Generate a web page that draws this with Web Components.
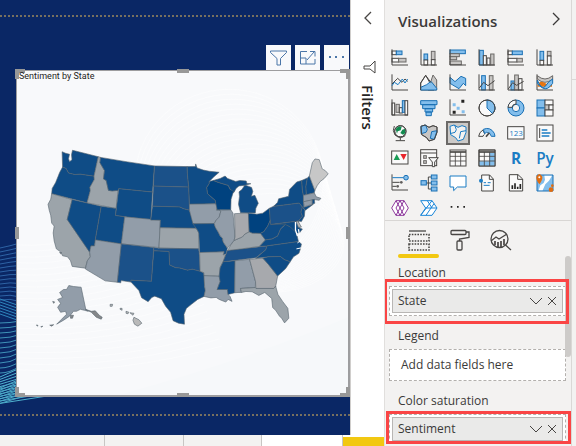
<!DOCTYPE html>
<html lang="en">
<head>
<meta charset="utf-8">
<title>Report editor</title>
<style>
  html, body { margin: 0; height: 100%; }
  body { font-family: "Open Sans", "Noto Sans", sans-serif; color: #3b3a39; background: #f3f2f1; overflow: hidden; }
</style>
</head>
<body>
<report-app></report-app>

<script>
const define = (name, html, setup) => customElements.define(name, class extends HTMLElement {
  constructor() {
    super();
    const t = document.createElement('template');
    t.innerHTML = html;
    this.attachShadow({ mode: 'open' }).append(t.content.cloneNode(true));
  }
  connectedCallback() { if (setup) setup(this, this.shadowRoot); }
});

/* ---------- icons: drawn on a 54-unit square ---------- */
const AX = '<path class="k" d="M3 1V48H51"/>';
const R = (c, x, y, w, h) => `<rect class="${c}" x="${x}" y="${y}" width="${w}" height="${h}"/>`;
const T = (size, weight, text) => `<text x="27" y="27" dy=".36em" text-anchor="middle" font-size="${size}" font-weight="${weight}" fill="#1a7cc4">${text}</text>`;
const MAPSHAPE = 'M3 7L15 3L27 10L39 5L51 9V25L43 46L27 51L20 41L5 32Z';
const ICONS = {
  'Stacked bar chart': R('w',3,6,13,11)+R('b',16,6,17,11)+R('w',3,28,20,11)+R('g',23,28,22,11)+AX,
  'Stacked column chart': R('b',12,15,11,18)+R('w',12,33,11,15)+R('g',34,7,11,25)+R('w',34,32,11,16)+AX,
  'Clustered bar chart': R('b',3,3,46,11)+R('g',3,14,28,9)+R('g',3,23,20,9)+R('g',3,36,34,11)+AX,
  'Clustered column chart': R('b',5,4,11,44)+R('w',16,20,9,28)+R('w',27,27,9,21)+R('g',38,15,10,33)+AX,
  '100% stacked bar chart': R('w',3,6,13,11)+R('b',16,6,30,11)+R('w',3,28,27,11)+R('g',30,28,16,11)+AX,
  '100% stacked column chart': R('b',12,7,11,27)+R('w',12,34,11,14)+R('g',34,7,11,14)+R('w',34,21,11,27)+AX,
  'Line chart': AX+'<path class="k" d="M3 30L20 13L33 25L42 15L50 22"/><path class="bl" d="M3 35L10 25L21 32L34 15L42 27L50 15"/>',
  'Area chart': '<path class="g" d="M24 48L39 3L50 18V48Z"/><path class="w" d="M2 48V27L17 4L42 48Z"/><path class="b" d="M2 48V40L20 32L33 22L50 43V48Z"/><path class="k" d="M2 48V27L17 4L33 26"/>',
  'Stacked area chart': '<path class="b" d="M3 10L18 23L36 7L50 13V35L43 28L30 44L18 37L3 28Z"/>'+AX,
  'Line and stacked column chart': R('b',11,5,11,43)+R('g',34,5,11,43)+AX+'<path class="k" d="M4 42L17 25L30 35L50 20"/>',
  'Line and clustered column chart': R('b',12,21,10,27)+R('g',23,3,11,45)+R('w',35,14,10,34)+AX+'<path class="k" d="M4 45L17 26L29 34L50 22"/>',
  'Ribbon chart': AX+'<path class="g" d="M4 5Q27 25 50 5V15Q27 35 4 15Z"/><path fill="#e87511" d="M5 33Q11 17 27 27T48 20V38H5Z"/><path class="b" d="M4 18Q16 48 27 38Q38 21 50 15V28Q34 51 20 42Q10 37 4 28Z"/>',
  'Waterfall chart': R('w',3,12,8,36)+R('g',15,16,10,24)+R('w',25,26,9,16)+R('b',34,5,8,35)+R('w',42,5,8,43)+AX,
  'Funnel chart': '<path class="b" d="M2 5H51V17H2ZM8 17H45V29H8ZM15 29H38V39H15ZM18 39H34V50H18Z"/>',
  'Scatter chart': AX+'<path fill="#252423" d="M37 2h9v9h-9zM11 35h9v9h-9z"/><path fill="#83beec" d="M11 13h9v9h-9zM23 23h9v9h-9zM38 34h9v9h-9z"/>',
  'Pie chart': '<circle class="w" cx="27" cy="27" r="24"/><path class="b" d="M27 3A24 24 0 0 1 44 44L27 27Z"/><circle class="k" cx="27" cy="27" r="24"/>',
  'Donut chart': '<path class="b" fill-rule="evenodd" d="M27 3A24 24 0 1 1 3 27A24 24 0 0 1 27 3M27 16A11 11 0 1 0 38 27A11 11 0 0 0 27 16"/><path class="w" d="M27 3A24 24 0 0 0 3 25L15 25A12 12 0 0 1 27 15Z"/>',
  'Treemap': R('b',3,3,24,24)+R('b',3,27,24,24)+R('w',27,3,24,15)+R('g',27,18,12,15)+R('w',39,18,12,15)+R('w',27,33,24,18),
  'Map': '<circle class="w" cx="28" cy="22" r="17"/><path fill="#118a4e" d="M14 15Q22 4 32 8L29 19L20 22L18 29ZM34 17L43 14L43 28L36 32L28 27Z"/><circle class="k" cx="28" cy="22" r="17"/><path class="k" d="M10 6Q3 20 12 33Q27 46 43 35M28 42V49M14 50H42"/>',
  'Filled map': `<path class="g" d="${MAPSHAPE}"/><path class="b" d="M3 7L17 3L22 17L18 25L3 29ZM35 23L51 20L43 46L31 43Z"/><path class="k" d="${MAPSHAPE}"/>`,
  'Shape map': `<path fill="#f3f2f1" d="${MAPSHAPE}"/><path class="bl" d="${MAPSHAPE}M17 3L22 17L18 25L3 29M51 20L35 23L31 43"/>`,
  'Gauge': '<path class="w" d="M2 37A25 25 0 0 1 15 18L20 30A13 13 0 0 0 15 37Z"/><path class="b" d="M16 16Q37 7 49 28L51 37H40Q38 25 25 25L20 29Z"/><path class="k" stroke-width="5" d="M24 38L34 26"/>',
  'Card': '<rect class="w" x="2" y="8" width="49" height="37"/>'+T(24,400,'123'),
  'Multi-row card': R('w',3,3,48,48)+'<path class="k" d="M11 12V42"/><path stroke="#1a7cc4" stroke-width="5" d="M17 18H34M17 27H44M17 36H40"/>',
  'KPI': R('w',2,6,49,39)+'<path fill="#189c55" d="M8 33L17 15L27 33Z"/><path fill="#e8252c" d="M28 15H47L38 33Z"/>',
  'Slicer': '<rect class="w" x="2" y="2" width="48" height="48"/><path class="k" d="M2 12H50"/>'+R('g',11,20,8,8)+R('g',11,35,8,8)+'<path class="w" d="M26 26H55L44 39V53H37V39Z"/>',
  'Table': R('w',3,3,48,48)+'<path class="k" stroke-width="5" d="M3 9H51"/><path class="k" stroke-width="2.5" d="M3 22H51M3 36H51M19 9V51M35 9V51"/>',
  'Matrix': R('w',3,3,48,48)+'<path fill="#83beec" d="M34 12H50V50H4V37H34Z"/><path class="k" stroke-width="5" d="M3 9H51"/><path class="k" stroke-width="2.5" d="M3 22H51M3 36H51M19 9V51M35 9V51"/><path class="k" d="M3 3H51V51H3Z"/>',
  'R visual': T(46,700,'R'),
  'Python visual': T(46,600,'Py'),
  'Key influencers': AX+'<path class="bl" d="M4 11H38"/><circle class="b" cx="45" cy="11" r="7"/><path class="k" d="M4 25H26M4 37H16"/><circle cx="31" cy="25" r="4" fill="#605e5c"/><circle cx="20" cy="37" r="4" fill="#605e5c"/>',
  'Decomposition tree': '<path class="k" d="M16 27H34M25 9V45M25 9H35M25 45H35"/>'+R('b',3,20,16,13)+R('b',34,3,17,12)+R('b',34,21,17,12)+R('b',34,39,17,12),
  'Q&A': '<path class="bl" fill="#fff" d="M3 6H51V39H25L14 50V39H3Z"/>',
  'Smart narrative': '<path class="w" d="M11 3H35L46 15V51H11Z"/><path class="k" d="M34 3V16H46"/><circle cx="9" cy="20" r="6" fill="#1a7cc4"/><path class="bl" d="M17 26H24M29 26H38M17 34H35"/>',
  'Paginated report': '<path class="w" d="M7 2H33L47 15V51H7Z"/><path class="k" d="M32 2V16H47"/><path stroke="#252423" stroke-width="5" d="M16 45V34M24 45V28M32 45V38M40 45V30"/>',
  'ArcGIS map': '<path class="b" d="M3 3H51V51H3Z"/><path fill="#fff" d="M25 5H48L39 20L28 31L20 49H8L13 34L23 27L27 17Z"/><path fill="#e06c10" d="M1 8Q10 -8 19 8Q20 18 10 31Q0 18 1 8Z"/><circle cx="10" cy="10" r="3" fill="#fff"/><circle cx="45" cy="47" r="7" fill="#e06c10"/><circle cx="49" cy="35" r="4" fill="#e06c10"/>',
  'Power Apps': '<path fill="#fff" stroke="#8e3a9d" d="M2 27L15 5H39L52 27L39 49H15ZM15 5L39 49M39 5L15 49"/><path stroke="#8e3a9d" d="M27 5L39 27L27 49L15 27Z"/>',
  'Power Automate': '<path fill="#fff" stroke="#1a86d9" d="M2 5H36L51 27L36 49H2L17 27Z"/><path stroke="#1a86d9" d="M2 49L36 5M22 5L36 27M17 27H51M18 49L42 14"/>',
  'More visuals': '<path fill="#252423" d="M5 21h5v5h-5zM24 21h5v5h-5zM43 21h5v5h-5z"/>'
};

define('viz-icon', `
  <style>
    :host { display: block; width: 18px; height: 18px; }
    svg { display: block; width: 100%; height: 100%; overflow: visible; fill: none; }
    .k { stroke: #484644; fill: none; } .w { stroke: #484644; fill: #fafafa; }
    .g { stroke: #6b6967; fill: #c8c6c4; } .b { stroke: #1a70b4; fill: #83beec; } .bl { stroke: #1a7cc4; }
    svg { stroke-width: 3; }
    text { font-family: "Open Sans", sans-serif; stroke: none; }
  </style><svg viewBox="0 0 54 54"></svg>`,
  (host, root) => { root.querySelector('svg').innerHTML = ICONS[host.getAttribute('name')]; });

define('viz-gallery', `
  <style>
    :host { display: grid; grid-template-columns: repeat(6, 24px); gap: 1px 5px; padding: 0 3px; }
    button { width: 24px; height: 24px; padding: 3px; border: 0; background: none; }
    button[aria-pressed=true] { background: #cccac8; padding: 1px; border: 2px solid #6b6967; }
  </style>`,
  (host, root) => {
    for (const name of Object.keys(ICONS)) {
      const b = document.createElement('button');
      b.setAttribute('aria-label', name);
      b.setAttribute('aria-pressed', name === 'Shape map');
      const i = document.createElement('viz-icon');
      i.setAttribute('name', name);
      b.append(i);
      root.append(b);
    }
  });

/* ---------- fields pane ---------- */
define('field-well', `
  <style>
    :host { display: block; }
    .label { display: block; font-size: 12px; line-height: 20px; padding-left: 9px; margin-bottom: 3px; }
    .well { position: relative; box-sizing: border-box; min-height: 30px; padding: 2px; background: #fff; border: 1px dashed #b3b0ad; font-size: 12px; line-height: 26px; }
    .mark { position: absolute; z-index: 2; border: 3px solid #fa4545; pointer-events: none; display: none; }
    :host([mark=wide]) .mark { display: block; inset: -8px -4px -9px -6px; }
    :host([mark=tight]) .mark { display: block; inset: -4px -6px -1px -4px; }
    ::slotted(span) { padding-left: 9px; }
  </style>
  <span class="label" id="l"></span>
  <div class="well" role="group" aria-labelledby="l"><slot></slot><div class="mark"></div></div>`,
  (host, root) => { root.querySelector('.label').textContent = host.getAttribute('label'); });

define('field-item', `
  <style>
    :host { display: flex; align-items: center; box-sizing: border-box; height: 24px; padding: 0 3px 0 5px; background: #eaeae9; border: 1px solid #b8b6b4; line-height: 22px; }
    span { flex: 1; }
    button { border: 0; background: none; padding: 0; height: 18px; display: grid; place-items: center; }
    svg { display: block; fill: none; stroke: #484644; stroke-width: 1; }
  </style>
  <span><slot></slot></span>
  <button aria-label="Field options"><svg width="18" height="12"><path d="M3 3L9 9L15 3"/></svg></button>
  <button aria-label="Remove field"><svg width="14" height="12"><path d="M3 2L11 10M11 2L3 10"/></svg></button>`);

define('pane-tabs', `
  <style>
    :host { display: flex; padding: 5px 0 0 13px; border-top: 1px solid #d8d6d4; height: 32px; }
    button { width: 41px; height: 32px; padding: 0 0 4px; border: 0; background: none; display: grid; place-items: center; }
    button[aria-selected=true] { position: relative; }
    button[aria-selected=true]::after { content: ""; position: absolute; inset: 28px 0 auto; height: 4px; border-radius: 2px; background: #f2c811; }
    svg { display: block; fill: none; stroke: #484644; stroke-width: 1.3; }
  </style>
  <button role="tab" aria-selected="true" aria-label="Fields"><svg width="22" height="22"><path d="M1 2H18"/><path stroke-dasharray="1.6 1.2" stroke-width="1.6" d="M1 5.500H21V12H1ZM1 15H21V21H1Z"/></svg></button>
  <button role="tab" aria-label="Format"><svg width="20" height="22"><rect x="1" y="1.500" width="15" height="4" rx="1"/><path d="M16 3H19V8.500L9.500 10V12"/><rect x="7" y="12" width="5" height="9" rx="1"/></svg></button>
  <button role="tab" aria-label="Analytics"><svg width="22" height="22"><circle cx="9.500" cy="10" r="8.500"/><path d="M15.500 16L21 21M1 12L6 8L9 10L17 5"/><path stroke-width="1.700" d="M5 16V12M8 18V13M11 18V12M14 16V10"/></svg></button>`);

define('viz-pane', `
  <style>
    :host { display: flex; flex-direction: column; position: relative; background: #f3f2f1; border-left: 1px solid #e1dfdd; border-right: 1px solid #dad8d6; overflow: hidden; }
    header { display: flex; align-items: center; justify-content: space-between; height: 46px; flex: none; padding: 0 10px 0 13px; box-sizing: border-box; }
    h2 { margin: 0 0 4px; font-size: 15px; line-height: 24px; font-weight: 600; }
    header button { border: 0; background: none; padding: 0 0 8px; }
    svg { display: block; fill: none; stroke: #3b3a39; stroke-width: 1.3; }
    .fields { display: flex; flex-direction: column; gap: 10px; padding: 5px 5px 0 4px; }
    .thumb { position: absolute; right: 0; top: 256px; width: 6px; height: 101px; border-radius: 3px; background: #cdcbc9; }
  </style>
  <header><h2>Visualizations</h2><button aria-label="Collapse pane"><svg width="10" height="14"><path d="M2 1L8 7L2 13"/></svg></button></header>
  <viz-gallery></viz-gallery>
  <pane-tabs role="tablist"></pane-tabs>
  <div class="fields">
    <field-well label="Location" mark="wide"><field-item>State</field-item></field-well>
    <field-well label="Legend"><span>Add data fields here</span></field-well>
    <field-well label="Color saturation" mark="tight"><field-item>Sentiment</field-item></field-well>
  </div>
  <div class="thumb"></div>`);

define('filters-pane', `
  <style>
    :host { display: flex; flex-direction: column; align-items: center; background: #fff; border-left: 1px solid #d0cecc; }
    button { border: 0; background: none; padding: 11px 0 0; }
    svg { display: block; fill: none; stroke: #484644; stroke-width: 1.3; }
    .funnel { margin: 35px 0 11px 4px; }
    h2 { margin: 0; writing-mode: vertical-rl; font-size: 15px; line-height: 20px; font-weight: 600; color: #252423; }
  </style>
  <button aria-label="Expand filters"><svg width="10" height="14"><path d="M8 1L2 7L8 13"/></svg></button>
  <svg class="funnel" width="14" height="14"><path stroke-width="1" d="M12 1V13L7 9H1V6H7Z"/></svg>
  <h2>Filters</h2>`);

/* ---------- map ---------- */
const A = '#0f4c86', B = '#1b5189', C = '#00427f', G = '#929da9', H = '#9ca4aa', L = '#a7a9ad';
const STATES = [
  [A,'61.500 151L65 152.500L69 153.500L68 158L69 161L71.500 159L71 154L72 149.500L98 156L93.700 175.700L80 173.700L74 174L68 172.500L65.500 168L62 166.500Z'],
  [A,'62 166.500L65.500 168L68 172.500L74 174L80 173.700L93.700 175.700L94 179L89.500 187L90 190L86.700 202.500L51 193.300L51.500 188L55 182L59 172Z'],
  [H,'51 193.300L71.700 199.300L66.700 219.300L89.300 252.300L90 257L87 261L85 268.500L71.700 266.700L70 261L67 257L62 256L60 252L55.700 249L53.500 241L52.500 233L53.500 226L51 223L50 215L48.500 210L47.300 204L50 199Z'],
  [A,'71.700 199.300L101 206L95 240L94.300 246L90.700 246L89.300 252.300L66.700 219.300Z'],
  [H,'98 156L100.300 156.700L99.700 162L104.300 170L103.300 178.500L106 180L108.300 190L112 190.500L118 190L116 208.300L86.700 202.500L90 190L89.500 187L94 179L93.700 175.700Z'],
  [A,'100.300 156.700L126 161L154.700 165.300L152.700 191.700L118.700 188.300L118 190L112 190.500L108.300 190L106 180L103.300 178.500L104.300 170L99.700 162Z'],
  [A,'118.700 188.300L152.700 191.700L151 220L115.300 215.300Z'],
  [A,'101 206L116 208.300L115.300 215.300L124.700 216.700L121.300 244L95 240Z'],
  [G,'124.700 216.700L160.700 220L159.300 247.700L121.300 244Z'],
  [G,'95 240L121.300 244L117.300 282.700L105 281.300L85 269.300L87 261L90 257L89.300 252.300L90.700 246L94.300 246Z'],
  [B,'121.300 244L154 247.700L151.700 281.700L131 280.700L131 282.500L121 281L120.700 283.300L117.300 282.700Z'],
  [B,'154.700 165.300L187.700 166L188 174L189.300 186.700L153.700 185.700Z'],
  [B,'153.700 185.700L189.300 186.700L190 206L190 210L184 208.500L180 206.700L152.700 206Z'],
  [A,'152.700 206L180 206.700L184 208.500L190 210L193 220L196.700 228.300L160.300 227.700L160.700 220L151 220Z'],
  [H,'160.300 227.700L196.700 228.300L198 230L199.500 233L199.300 249L159.300 248.300Z'],
  [B,'154 247.700L159.300 248.300L199.300 249L200.300 257L200.700 271.700L193 269.500L188 270.500L180 268.300L176 268L170 265.300L169.300 251.700L154 251Z'],
  [A,'154 251L169.300 251.700L170 265.300L176 268L180 268.300L188 270.500L193 269.500L200.700 271.700L204.500 273L205.300 287L206 291L204.700 297L198.300 300L192 305L187 309L184.500 315L185 325L179 324L173.500 321.500L171 313L166 307L161.700 299.300L155 296.700L152 298L148.300 302.300L141.700 298.300L139 291L131 282.500L131 280.700L151.700 281.700Z'],
  [A,'187.700 166L196 166L196.300 163.300L197.700 167.300L204 169.500L210 170.700L220 171.700L215 176L210 181L210 183L207.500 187L208.300 193.300L216 200L216.700 203.500L190 204L189.300 186.700L188 174Z'],
  [G,'190 204L216.700 203.500L218 207.500L221.700 211L220 217L217 220L215 223.500L193.500 223.700L190 210Z'],
  [A,'193.500 223.700L215 223.500L216 227L219 232L221 236L223.300 238L224 242L228.300 248.300L227 254L224 255L225 252L200.300 252.700L199.500 233L198 230L196.700 228.300Z'],
  [H,'200.300 252.700L225 252L224 255L226.700 255L224 262L221 268L220 276.700L204.700 276L204.500 273L200.700 271.700Z'],
  [G,'204.700 276L220 276.700L221 282L218 290L228.300 290L229 295L231 297L233 302L229 300L226.700 302.700L220 300L217 298L211.700 298.500L204.700 297L206 291L205.300 287Z'],
  [A,'224 262L236 261L235.700 293.300L229 295L228.300 290L218 290L221 282L220 276.700L221 268Z'],
  [G,'236 261L250.700 259.500L254 272L256.700 282L256.500 288L241.500 289L242.500 293L239 293L235.700 293.300Z'],
  [L,'250.700 259.500L264 258.300L270 265L279 276.500L277 287L275 289L257 289L256.700 282L254 272Z'],
  [H,'241.500 289L256.500 288L257 289L275 289L277 286.500L279.300 295L284 302L289.300 309L290.300 319L286 323.700L283 319L280.700 316.700L277 311L274 308.300L273 299L266 293L260 296L253.300 292.300L247 292L242.500 293Z'],
  [B,'228.300 250.700L232 250L243 249L268.300 246L267 250L257 258L224 262L226.700 255Z'],
  [H,'228.500 250.700L231.700 245L235 240.500L243.300 237L246 234L250.300 231.700L253.300 233L261.700 233.300L266.700 240L260.700 246.500L243 249Z'],
  [G,'218 207.500L217.300 210L231.700 209.500L234 213L236 237L235 240.500L231 245.500L228.300 248.300L224 242L223.300 238L221 236L219 232L216 227L215 223.500L217 220L220 217L221.700 211Z'],
  [L,'235.500 213.500L249.500 212.700L250.300 231.700L246 234L243.300 237L235 240.500L236 237Z'],
  [C,'249.500 213L258 214L264 213L270.700 208L271.700 220L269 226L265 231.700L261.700 233.300L253.300 233L250.300 231.700Z'],
  [A,'241.500 212.500L239.500 204L240.500 196L240 191.500L243 189L246 184.500L252.700 187L254 191L252.500 196L256 195L259.500 203L257 208L256.500 212.700Z'],
  [A,'214 180L221 178L226 175.500L228.500 178L236.700 181L241 180L247.300 180.500L248 183L252 183.300L245 185L240 185.500L237 188L235 192L232.700 192L229 185L219 182Z'],
  [C,'210 181L214 180L219 182L229 185L231 189L234.500 191L232 199L231.700 209.500L218 209.500L216.700 203.500L216 200L208.300 193.300L207.500 187L210 183Z'],
  [B,'270.700 208L275 206L300.700 202.700L304 206.700L302.500 212L304 216L300 221L271.700 224.500Z'],
  [A,'275 206L279 202L280 198.500L290 196L291 189L298.300 181.500L303.300 180L304 190L305 195L305.500 207L315 204L307 210L304 206.700L300.700 202.700Z'],
  [A,'303.300 180L309 177.500L307.500 186L308 194.500L305 195L304 190Z'],
  [A,'309 177.500L311 175.500L316.500 190L316 192.500L308 194.500L307.500 186Z'],
  ['#c7c7c7','311 175.500L314 162L316.700 158.300L321 159L324 168.300L327 170L330 173.300L326 178L322 181L319 185L316.500 190Z'],
  [G,'305 195L316 192.500L318 196.500L322.700 198L321 200L317 199.500L305 201.500Z'],
  [G,'305 201.500L314 199.500L314 204L306 206.500Z'],
  [A,'314 199.500L316 199L316.500 203L314 204Z'],
  [A,'304 206.700L306.500 210L306 216L303 221.500L300 221L304 216L302.500 212Z'],
  [A,'272 224.500L300 221L301 228L304 229L301 233L297 233L290 226Z'],
  ['#b5b5b5','297.500 221.500L299.500 221L303 227L300 227.500Z'],
  [A,'271.700 220L272 224.500L283.300 224L287 224L282 229L279 236L273.500 239L266.700 240L261.700 233.300L265 231.700L269 226Z'],
  [A,'260.700 246.500L266.700 240L273.500 239L279 236L282 229L287 224.500L292 227L295 230L298 233L300 241.700L268 246Z'],
  [A,'268.300 246L300 241.700L303 244L302 249L300.500 253.500L295 257L291.700 262L286 260L281.700 256.700L270 257L257 258.500L267 250Z'],
  [A,'264 258.300L270 257L281.700 256.700L286 260L291.700 262L287 269L279 276.500L270 265Z'],
  [G,'68.300 286L73 287L80.700 287.700L85.500 310.500L88 312L84 311L80 310L76 312L73 312L69 317L63 321L56 325L61 320L66 315L65 312L60 313L57 308L60 304L57 300L62 298L59 293L63 290L66 290Z'],
  ['#858789','85 310L91 312L95 311.500L99 316L102 318L101 320L96 318L91 313Z'],
  ['#858789','70 316L73 316L72 319L70 319ZM52 302L54 302.500L53 304ZM49 326L53 325.500L51 327ZM40 327.500L42 327L41 328ZM35.500 326L37 326L37 327ZM59 252.500L61 253L60 254Z'],
  ['#b9b9b9','134 318L139 320.500L142 324L138 327L134.500 325L133 321ZM120 309L122 309L122 311L120 310ZM126 312L129 313L128 314.500L126 314ZM130 313.500L134 314L133 316ZM110 305L112.500 305L112 307L110 307Z']
];

define('state-map', `
  <style>
    :host { display: block; min-height: 0; }
    svg { display: block; width: 100%; height: 100%; }
  </style>
  <svg viewBox="16 70 334 326" role="img" aria-label="Sentiment by State">
    <g id="rings" fill="none" stroke="#fff" stroke-opacity=".45"></g>
    <path d="M350 318Q250 360 120 396H350Z" fill="#f6f8fa"/>
    <g id="states" stroke="#56646e" stroke-width=".6" stroke-linejoin="round"></g>
    <g fill="none" stroke="#fff" stroke-width="1.300"><path d="M297 222L297 230L299 236M300 229L301 235"/></g>
    <path d="M303 240L299 243M303 248L298 249" stroke="#fff"/>
  </svg>`,
  (host, root) => {
    root.getElementById('states').innerHTML = STATES.map(([c, d]) => `<path fill="${c}" d="M${d}"/>`).join('');
    let r = '';
    for (let i = 0; i < 22; i++) r += `<ellipse cx="${230 + i * 2}" cy="${180 + i * 3}" rx="${95 - i}" ry="${92 - i * 2}"/>`;
    for (let i = 0; i < 22; i++) r += `<path d="M16 ${245 + i * 6}Q${80 + i * 2} ${250 + i * 6} ${160 + i * 3} ${200 + i * 7}"/>`;
    root.getElementById('rings').innerHTML = r;
  });

define('visual-card', `
  <style>
    :host { display: flex; flex-direction: column; position: relative; background: #f8f9fb; border: 2px solid #9d9d9f; border-width: 1px 2px 2px 1px; box-sizing: border-box; min-height: 0; }
    h3 { position: absolute; left: 2px; top: 0; margin: 0; font: 400 9px/10px Roboto, sans-serif; color: #252423; }
    slot { display: block; flex: 1; min-height: 0; }
    ::slotted(state-map) { height: 100%; }
    i { position: absolute; box-sizing: border-box; width: 10px; height: 10px; border: 0 solid #989898; }
    .tl { left: -2px; top: -2px; border-width: 4px 0 0 4px; } .tr { right: -2px; top: -2px; border-width: 4px 4px 0 0; }
    .bl { left: -2px; bottom: -2px; border-width: 0 0 4px 4px; } .br { right: -2px; bottom: -2px; border-width: 0 4px 4px 0; }
    .t, .b { left: 50%; margin-left: -6px; width: 12px; height: 4px; background: #989898; } .t { top: -2px; } .b { bottom: -2px; }
    .l, .r { top: 50%; margin-top: -6px; width: 4px; height: 12px; background: #989898; } .l { left: -2px; } .r { right: -2px; }
  </style>
  <slot></slot>
  <i class="tl"></i><i class="t"></i><i class="tr"></i><i class="l"></i><i class="r"></i><i class="bl"></i><i class="b"></i><i class="br"></i>
  <h3>Sentiment by State</h3>`);

define('visual-toolbar', `
  <style>
    :host { display: flex; justify-content: flex-end; gap: 4px; padding-right: 1px; }
    button { width: 25px; height: 25px; padding: 0; border: 0; background: #f8f9fb; display: grid; place-items: center; }
    svg { display: block; fill: none; stroke: #4b76a8; stroke-width: 1; }
  </style>
  <button aria-label="Filters"><svg width="19" height="19"><path d="M1.500 3H17.500V4.500L11.500 10.500V17H8V10.500L1.500 4.500Z"/></svg></button>
  <button aria-label="Focus mode"><svg width="19" height="19"><path d="M9 3.500H2.500V16H17V11M2.500 10H8V16M9 12L16 4M12 3.500H17V8.500"/></svg></button>
  <button aria-label="More options"><svg width="19" height="19"><path fill="#4b76a8" stroke="none" d="M2 8h2v2h-2zM8 8h2v2h-2zM15 8h2v2h-2z"/></svg></button>`);

define('report-canvas', `
  <style>
    :host { display: flex; flex-direction: column; position: relative; background: #0a2765; padding: 15px 0 19px; box-sizing: border-box; min-height: 0; overflow: hidden; }
    .waves { position: absolute; left: 0; bottom: 0; width: 60px; height: 200px; fill: none; }
    .guide { position: relative; height: 2px; flex: none; background: repeating-linear-gradient(90deg, #77705f 0 2px, transparent 2px 4px); }
    visual-toolbar { margin-top: 28px; position: relative; flex: none; }
    visual-card { flex: 1; margin: 0 0 17px 16px; }
  </style>
  <svg class="waves" viewBox="0 234 60 200"><g></g></svg>
  <div class="guide"></div>
  <visual-toolbar></visual-toolbar>
  <visual-card><state-map></state-map></visual-card>
  <div class="guide"></div>`,
  (host, root) => {
    let p = '';
    for (let i = 0; i < 14; i++) p += `<path stroke="#2e63a5" d="M0 ${247 + i * 4}Q10 ${245 + i * 4} 20 ${242 + i * 4.500}"/>`;
    for (let i = 0; i < 6; i++) p += `<path stroke="#2f86bd" d="M0 ${298 + i * 3}L20 ${305 + i * 3}"/>`;
    for (let i = 0; i < 11; i++) p += `<path stroke="#3f93b8" d="M0 ${322 + i * 5}Q10 ${322 + i * 5} 20 ${320 + i * 4.500}"/>`;
    for (let i = 0; i < 12; i++) p += `<path stroke="#4fb2cf" d="M0 ${376 + i * 2.400}L${18 + i * 3} ${368 + i * 2.400}"/>`;
    for (let i = 0; i < 8; i++) p += `<path stroke="#4aa9c6" d="M0 ${387 + i * 2.200}L${47} ${366 + i * 1.200 + i * 2}"/>`;
    root.querySelector('g').innerHTML = p;
  });

define('page-tabs', `
  <style>
    :host { display: grid; grid-template-columns: 105fr 79fr 79fr 81fr 41fr; height: 11px; background: #fff; }
    button { border: 0; border-right: 1px solid #c8c6c4; background: #f3f2f1; padding: 0; }
    button:nth-of-type(4) { background: #fff; }
    button:last-child { border: 0; background: #f2c811; margin-top: 2px; }
  </style>
  <button aria-label="Page 1"></button><button aria-label="Page 2"></button><button aria-label="Page 3"></button><button aria-label="Page 4"></button><button aria-label="New page"></button>`);

define('report-app', `
  <style>
    :host { display: grid; grid-template: minmax(0, 1fr) auto / minmax(0, 1fr) 34px 188px 4px; height: 100vh; }
    page-tabs { grid-area: 2 / 1 / 3 / 3; }
    viz-pane { grid-area: 1 / 3 / 3 / 4; }
    .edge { grid-area: 1 / 4 / 3 / 5; height: 79px; border-bottom: 1px solid #dad8d6; }
  </style>
  <report-canvas></report-canvas>
  <filters-pane></filters-pane>
  <viz-pane></viz-pane>
  <div class="edge"></div>
  <page-tabs></page-tabs>`);
</script>
</body>
</html>
